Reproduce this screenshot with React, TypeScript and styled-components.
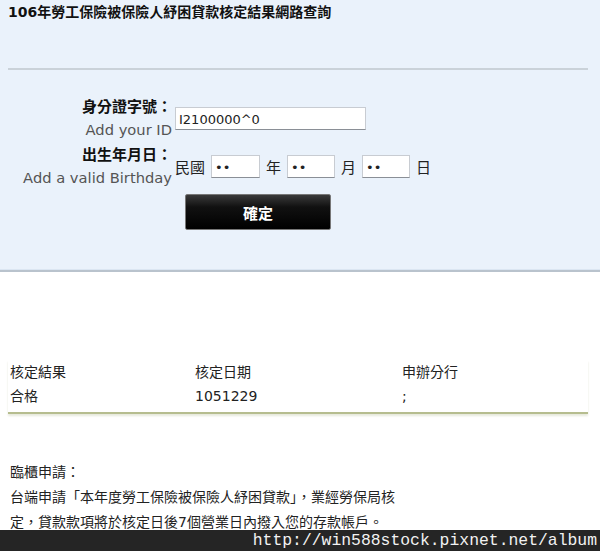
import React from "react";
import styled, { createGlobalStyle } from "styled-components";

const GlobalStyle = createGlobalStyle`
  html, body {
    margin: 0;
    padding: 0;
    background: #ffffff;
  }
  body {
    font-family: "DejaVu Sans", "Noto Sans CJK TC", sans-serif;
    color: #111;
  }
`;

const Page = styled.div`
  position: relative;
  width: 600px;
  height: 551px;
  overflow: hidden;
  background: #ffffff;
`;

const Panel = styled.div`
  height: 269px;
  background: #eaf2fb;
  padding: 0 12px 0 8px;
  border-bottom: 1px solid #dbe6f2;
  box-shadow: 0 2px 0 #b9c3cd;
  margin-bottom: 2px;
`;

const Title = styled.h1`
  margin: 0;
  padding-top: 1px;
  font-size: 14px;
  line-height: 22px;
  font-weight: bold;
  color: #111;
`;

const Rule = styled.div`
  margin-top: 45px;
  height: 2px;
  background: #cad2d9;
  width: 580px;
`;

const Form = styled.div`
  display: grid;
  grid-template-columns: 164px 1fr;
  column-gap: 3px;
  row-gap: 1px;
  margin-top: 25px;
  align-items: center;
`;

const LabelBlock = styled.div`
  display: flex;
  flex-direction: column;
  align-items: flex-end;
`;

const Label = styled.div`
  font-family: "Noto Sans CJK TC", sans-serif;
  font-size: 15px;
  line-height: 22px;
  font-weight: bold;
  color: #111;
`;

const Hint = styled.div`
  font-family: "DejaVu Sans", sans-serif;
  font-size: 14.7px;
  line-height: 25px;
  color: #555;
  white-space: nowrap;
`;

const TextField = styled.input<{ $w: number }>`
  box-sizing: border-box;
  width: ${(p) => p.$w}px;
  height: 23px;
  margin: 0;
  border: 1px solid #c8ccd2;
  border-bottom-color: #8a8f96;
  background: #fff;
  padding: 1px 3px 0;
  font-family: "DejaVu Sans", sans-serif;
  font-size: 13px;
  color: #222;
  outline: none;
`;

const DateRow = styled.div`
  display: flex;
  align-items: center;
  gap: 6px;
  font-family: "Noto Sans CJK TC", sans-serif;
  font-size: 15px;
  color: #222;
`;

const Button = styled.button`
  grid-column: 2;
  justify-self: start;
  margin: 3px 0 0 10px;
  width: 146px;
  height: 36px;
  border: 1px solid #777;
  border-radius: 2px;
  background: linear-gradient(#3a3a3a 0%, #111 35%, #000 100%);
  color: #fff;
  font-family: "Noto Sans CJK TC", sans-serif;
  font-size: 15px;
  font-weight: bold;
  cursor: pointer;
`;

const Results = styled.div`
  padding: 88px 12px 0 8px;
`;

const Table = styled.div`
  display: grid;
  grid-template-columns: 185px 207px 1fr;
  padding-left: 2px;
  font-size: 14px;
  line-height: 24px;
  color: #222;
  border-bottom: 2px solid #b6bd8f;
  box-shadow: 0 2px 2px #e7e9dc;
  padding-bottom: 4px;
`;

const Notice = styled.div`
  padding: 46px 0 0 2px;
  font-size: 14px;
  line-height: 25px;
  color: #222;
`;

const Watermark = styled.div`
  position: absolute;
  left: 0;
  right: 0;
  bottom: 0;
  height: 21px;
  background: rgba(28, 28, 28, 0.96);
  color: #f2f2f2;
  font-family: "Liberation Mono", monospace;
  font-size: 16.4px;
  line-height: 21px;
  text-align: right;
  padding-right: 3px;
`;

const App = () => {
  return (
    <Page>
      <GlobalStyle />
      <Panel>
        <Title>106年勞工保險被保險人紓困貸款核定結果網路查詢</Title>
        <Rule />
        <Form>
          <LabelBlock>
            <Label>身分證字號：</Label>
            <Hint>Add your ID</Hint>
          </LabelBlock>
          <TextField $w={191} readOnly value="I2100000^0" />
          <LabelBlock>
            <Label>出生年月日：</Label>
            <Hint>Add a valid Birthday</Hint>
          </LabelBlock>
          <DateRow>
            <span>民國</span>
            <TextField $w={49} readOnly value="••" />
            <span>年</span>
            <TextField $w={48} readOnly value="••" />
            <span>月</span>
            <TextField $w={48} readOnly value="••" />
            <span>日</span>
          </DateRow>
          <Button>確定</Button>
        </Form>
      </Panel>
      <Results>
        <Table>
          <span>核定結果</span>
          <span>核定日期</span>
          <span>申辦分行</span>
          <span>合格</span>
          <span>1051229</span>
          <span>;</span>
        </Table>
        <Notice>
          臨櫃申請：
          <br />
          台端申請「本年度勞工保險被保險人紓困貸款」，業經勞保局核
          <br />
          定，貸款款項將於核定日後7個營業日內撥入您的存款帳戶。
        </Notice>
      </Results>
      <Watermark>http://win588stock.pixnet.net/album</Watermark>
    </Page>
  );
};

export default App;
